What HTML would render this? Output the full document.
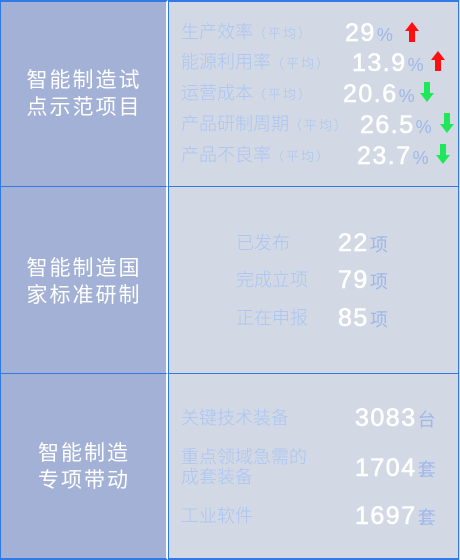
<!DOCTYPE html>
<html><head><meta charset="utf-8"><style>
*{margin:0;padding:0;box-sizing:border-box}
body{width:460px;height:560px;background:#d2d9e5;position:relative;overflow:hidden;font-family:"Liberation Sans","Noto Sans CJK SC",sans-serif}
.l{position:absolute;left:0;width:168px;background:#a3b1d6;border:1px solid #2f7ae5;border-right:2px solid #fff}
.r{position:absolute;left:168px;width:291px;background:#d2d9e5;border:1px solid #2f7ae5}
.lt{position:absolute;left:0;width:168px;color:#fff;font-size:21px;line-height:27px;text-align:center;letter-spacing:2px}
.t{position:absolute;color:#aac4f3;font-size:18px;white-space:nowrap;line-height:20px;font-weight:300}
.t small{font-size:13px;letter-spacing:2px}
.n{position:absolute;color:#fff;font-size:25px;white-space:nowrap;line-height:24px;letter-spacing:1.5px;-webkit-text-stroke:0.6px #fff}
.n span{color:#9db7e8;font-size:18px;letter-spacing:0;-webkit-text-stroke:0;margin-left:1px}
</style></head><body>
<div class="l" style="top:0;height:187px;border-top-width:2px"></div>
<div class="l" style="top:186px;height:188px"></div>
<div class="l" style="top:373px;height:187px;border-bottom-width:2px"></div>
<div class="r" style="top:0;height:187px;border-top-width:2px"></div>
<div class="r" style="top:186px;height:188px"></div>
<div class="r" style="top:373px;height:187px;border-bottom-width:2px"></div>

<div class="lt" style="top:67px">智能制造试<br>点示范项目</div>
<div class="lt" style="top:255px">智能制造国<br>家标准研制</div>
<div class="lt" style="top:440px">智能制造<br>专项带动</div>

<div class="t" style="left:181px;top:22px">生产效率<small>（平均）</small></div>
<div class="n" style="left:345px;top:21px">29<span>%</span></div>
<div class="t" style="left:181px;top:52px">能源利用率<small>（平均）</small></div>
<div class="n" style="left:352px;top:51px">13.9<span>%</span></div>
<div class="t" style="left:181px;top:83px">运营成本<small>（平均）</small></div>
<div class="n" style="left:343px;top:82px">20.6<span>%</span></div>
<div class="t" style="left:181px;top:114px">产品研制周期<small>（平均）</small></div>
<div class="n" style="left:360px;top:113px">26.5<span>%</span></div>
<div class="t" style="left:181px;top:145px">产品不良率<small>（平均）</small></div>
<div class="n" style="left:357px;top:144px">23.7<span>%</span></div>

<svg style="position:absolute;left:0;top:0" width="460" height="190">
<g fill="#ff1010"><path d="M412 22 L419 31 L415 31 L415 42 L409 42 L409 31 L405 31Z"/><path d="M438 51 L445 60 L441 60 L441 71 L435 71 L435 60 L431 60Z"/></g>
<g fill="#1ee85a"><path d="M427 102 L434 93 L430 93 L430 82 L424 82 L424 93 L420 93Z"/><path d="M447 133 L454 124 L450 124 L450 113 L444 113 L444 124 L440 124Z"/><path d="M443 164 L450 155 L446 155 L446 144 L440 144 L440 155 L436 155Z"/></g>
</svg>

<div class="t" style="left:236px;top:233px">已发布</div>
<div class="n" style="left:338px;top:231px">22<span>项</span></div>
<div class="t" style="left:236px;top:270px">完成立项</div>
<div class="n" style="left:338px;top:268px">79<span>项</span></div>
<div class="t" style="left:236px;top:308px">正在申报</div>
<div class="n" style="left:338px;top:306px">85<span>项</span></div>

<div class="t" style="left:181px;top:408px">关键技术装备</div>
<div class="n" style="left:355px;top:406px">3083<span>台</span></div>
<div class="t" style="left:181px;top:447px">重点领域急需的<br>成套装备</div>
<div class="n" style="left:355px;top:456px">1704<span>套</span></div>
<div class="t" style="left:181px;top:506px">工业软件</div>
<div class="n" style="left:355px;top:504px">1697<span>套</span></div>
</body></html>
